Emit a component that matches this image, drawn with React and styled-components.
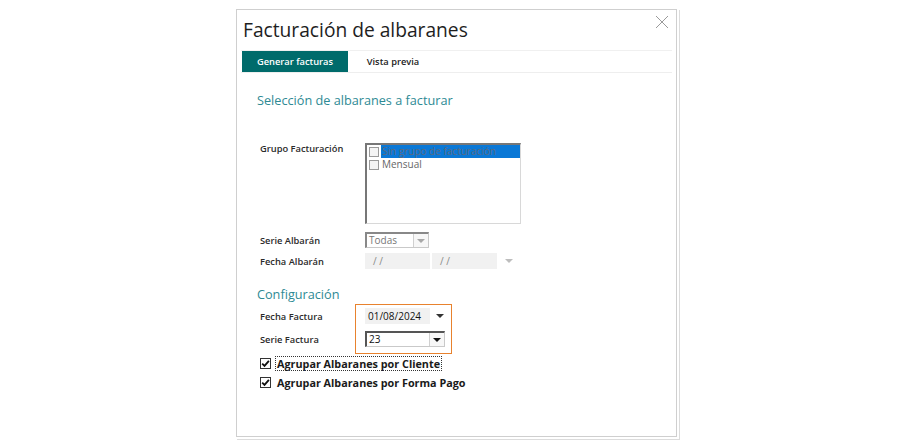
import styled, { createGlobalStyle } from "styled-components";

const Global = createGlobalStyle`
  html, body {
    margin: 0;
    background: #ffffff;
    font-family: "Open Sans", "Noto Sans", sans-serif;
  }
`

const Page = styled.div`
  width: 910px;
  height: 443px;
  position: relative;
  overflow: hidden;
`

const Dialog = styled.div`
  position: relative;
  margin: 9px 0 0 236px;
  width: 439px;
  height: 426px;
  background: #fff;
  border: 1px solid #cfcfcf;
  box-shadow: 1px 1px 0 1px #ffffff, 2px 2px 0 1px #dcdcdc;
  display: flex;
  flex-direction: column;
`

const Title = styled.div`
  font-size: 19.2px;
  color: #1e1e1e;
  padding: 6px 0 0 6px;
  height: 34px;
`

const Close = styled.button`
  position: absolute;
  top: 5px;
  right: 6px;
  width: 16px;
  height: 16px;
  padding: 0;
  border: none;
  background: none;
`

const TabBar = styled.div`
  display: flex;
  margin: 0 4px;
  border-top: 1px solid #f0f0f0;
  border-bottom: 1px solid #eeeeee;
  height: 21px;
`

const Tab = styled.div`
  width: ${p => p.$w}px;
  display: flex;
  align-items: center;
  justify-content: center;
  font-size: 9.3px;
  font-weight: 600;
  color: ${p => (p.$active ? "#ffffff" : "#222")};
  background: ${p => (p.$active ? "#006b6b" : "transparent")};
  margin-left: ${p => (p.$active ? "1px" : "0")};
`

const Body = styled.div`
  padding: 17px 0 0 20px;
  position: relative;
  flex: 1;
`

const Section = styled.div`
  font-size: 12.7px;
  color: #2e8a94;
  height: 20px;
  line-height: 20px;
  margin-bottom: ${p => p.$mb}px;
`

const Row = styled.div`
  display: flex;
  align-items: ${p => (p.$top ? "flex-start" : "center")};
  padding-left: 3px;
  margin-bottom: ${p => p.$mb || 0}px;
  height: ${p => p.$h}px;
`

const Label = styled.div`
  width: 105px;
  font-size: 9.3px;
  font-weight: 600;
  color: #2a2a2a;
  margin-top: ${p => (p.$top ? "-6px" : "0")};
`

const ListBox = styled.div`
  width: 153px;
  height: 78px;
  box-sizing: content-box;
  border: 1px solid #d8d8d8;
  border-top: 2px solid #777;
  border-left: 2px solid #777;
  background: #fff;
  margin-top: -5px;
`

const ListItem = styled.div`
  display: flex;
  align-items: center;
  height: 13px;
  font-size: 10px;
  color: #666;
`

const Box = styled.span`
  width: 10px;
  height: 10px;
  border: 1px solid #9a9a9a;
  background: #f4f4f4;
  box-sizing: border-box;
  margin: 0 2px 0 2px;
  flex: none;
`

const ItemText = styled.span`
  flex: 1;
  height: 13px;
  line-height: 13px;
  padding-left: 1px;
  color: ${p => (p.$sel ? "#5a6a80" : "#666")};
  background: ${p => (p.$sel ? "#0a78d6" : "transparent")};
`

const Combo = styled.div`
  display: flex;
  width: ${p => p.$w}px;
  height: 16px;
  box-sizing: border-box;
  border: 1px solid #c9c9c9;
  border-top: 2px solid ${p => (p.$dark ? "#555" : "#888")};
  border-left: 2px solid ${p => (p.$dark ? "#555" : "#888")};
  background: #fff;
`

const ComboText = styled.div`
  flex: 1;
  font-size: 10px;
  line-height: 13px;
  padding-left: 2px;
  color: ${p => (p.$dark ? "#111" : "#777")};
`

const ComboButton = styled.div`
  width: 14px;
  border-left: 1px solid #d0d0d0;
  display: flex;
  align-items: center;
  justify-content: center;
  background: #f7f7f7;
`

const Arrow = styled.span`
  width: 0;
  height: 0;
  border-left: 4px solid transparent;
  border-right: 4px solid transparent;
  border-top: 4px solid ${p => p.$c};
`

const DateField = styled.div`
  width: 65px;
  height: 16px;
  background: #f1f1f1;
  font-size: 10px;
  line-height: 16px;
  padding-left: ${p => p.$pl || 8}px;
  box-sizing: border-box;
  color: ${p => (p.$dark ? "#111" : "#888")};
  margin-right: 2px;
`

const DateArrow = styled.div`
  display: flex;
  align-items: center;
  margin-left: ${p => p.$ml}px;
`

const Highlight = styled.div`
  position: absolute;
  left: 118px;
  top: 231px;
  width: 95px;
  height: 48px;
  border: 1px solid #e8822e;
`

const Check = styled.div`
  display: flex;
  align-items: center;
  padding-left: 3px;
  height: 15px;
  margin-bottom: ${p => p.$mb || 0}px;
  font-size: 10.8px;
  font-weight: 700;
  color: #1a1a1a;
`

const CheckBox = styled.span`
  width: 11px;
  height: 11px;
  box-sizing: border-box;
  border: 1px solid #333;
  display: flex;
  align-items: center;
  justify-content: center;
  margin-right: 5px;
  background: #fff;
`

const CheckText = styled.span`
  padding: 0 1px;
  outline: ${p => (p.$focus ? "1px dotted #333" : "none")};
  line-height: 13px;
`

const Tick = () => (
  <svg width="9" height="9" viewBox="0 0 9 9">
    <path d="M1.2 4.6 L3.5 6.9 L7.9 1.8" fill="none" stroke="#111" strokeWidth="1.8" />
  </svg>
)

export default function App() {
  return (
    <Page>
      <Global />
      <Dialog>
        <Title>Facturación de albaranes</Title>
        <Close aria-label="Cerrar">
          <svg width="14" height="14" viewBox="0 0 14 14">
            <path d="M1 1 L13 13 M13 1 L1 13" stroke="#9a9a9a" strokeWidth="1" />
          </svg>
        </Close>
        <TabBar>
          <Tab $active $w={106}>Generar facturas</Tab>
          <Tab $w={90}>Vista previa</Tab>
        </TabBar>
        <Body>
          <Section $mb={38}>Selección de albaranes a facturar</Section>
          <Row $top $h={78} $mb={6}>
            <Label $top>Grupo Facturación</Label>
            <ListBox>
              <ListItem>
                <Box />
                <ItemText $sel>Sin grupo de facturación</ItemText>
              </ListItem>
              <ListItem>
                <Box />
                <ItemText>Mensual</ItemText>
              </ListItem>
            </ListBox>
          </Row>
          <Row $h={16} $mb={5}>
            <Label>Serie Albarán</Label>
            <Combo $w={64}>
              <ComboText>Todas</ComboText>
              <ComboButton><Arrow $c="#a8a8a8" /></ComboButton>
            </Combo>
          </Row>
          <Row $h={16} $mb={15}>
            <Label>Fecha Albarán</Label>
            <DateField>/ /</DateField>
            <DateField>/ /</DateField>
            <DateArrow $ml={6}><Arrow $c="#bdbdbd" /></DateArrow>
          </Row>
          <Section $mb={4}>Configuración</Section>
          <Row $h={16} $mb={7}>
            <Label>Fecha Factura</Label>
            <DateField $dark $pl={3}>01/08/2024</DateField>
            <DateArrow $ml={4}><Arrow $c="#333" /></DateArrow>
          </Row>
          <Row $h={16} $mb={9}>
            <Label>Serie Factura</Label>
            <Combo $w={80} $dark>
              <ComboText $dark>23</ComboText>
              <ComboButton><Arrow $c="#111" /></ComboButton>
            </Combo>
          </Row>
          <Check $mb={4}>
            <CheckBox><Tick /></CheckBox>
            <CheckText $focus>Agrupar Albaranes por Cliente</CheckText>
          </Check>
          <Check>
            <CheckBox><Tick /></CheckBox>
            <CheckText>Agrupar Albaranes por Forma Pago</CheckText>
          </Check>
          <Highlight />
        </Body>
      </Dialog>
    </Page>
  )
}
